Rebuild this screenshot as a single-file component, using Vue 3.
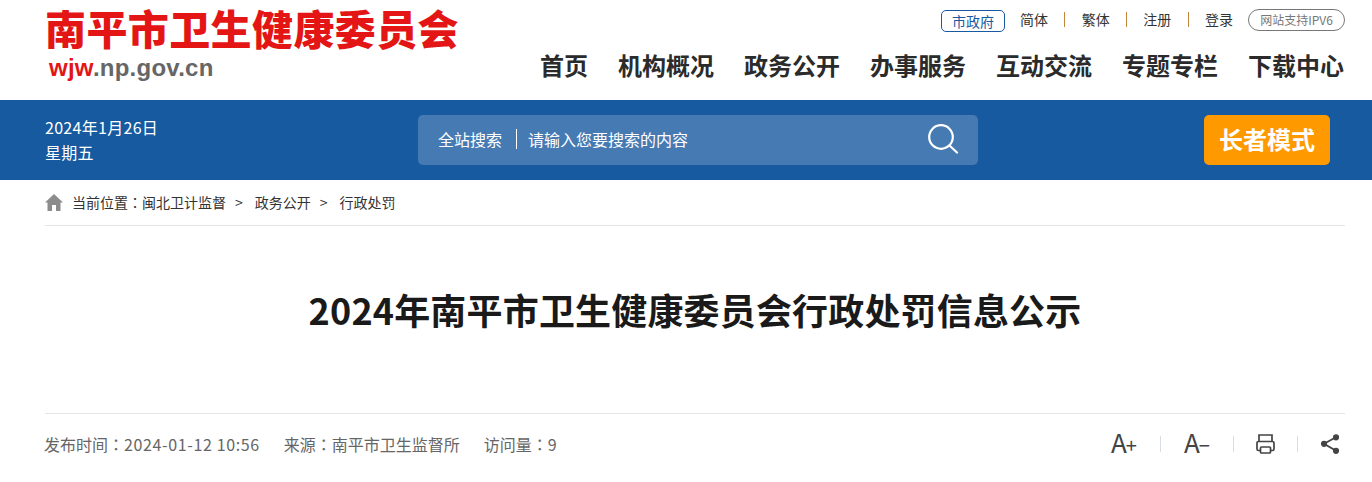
<template>
  <div class="page">
    <header class="head">
      <div class="logo">
        <div class="logo-name">南平市卫生健康委员会</div>
        <div class="logo-url"><span class="red">wjw</span>.np.gov.cn</div>
      </div>
      <div class="head-right">
        <div class="toplinks">
          <a class="gov">市政府</a>
          <template v-for="(item, i) in links" :key="item">
            <a class="lnk">{{ item }}</a>
            <i v-if="i < links.length - 1" class="sep"></i>
          </template>
          <a class="ipv6">网站支持IPV6</a>
        </div>
        <nav class="nav">
          <a v-for="item in navs" :key="item">{{ item }}</a>
        </nav>
      </div>
    </header>

    <div class="band">
      <div class="date">
        <div>2024年1月26日</div>
        <div>星期五</div>
      </div>
      <div class="search">
        <span class="search-label">全站搜索</span>
        <span class="search-text">请输入您要搜索的内容</span>
        <svg class="search-icon" width="31" height="30" viewBox="0 0 31 30" fill="none" stroke="#fff" stroke-width="2.200" stroke-linecap="round">
          <circle cx="13" cy="13" r="11.800" />
          <path d="M22 22l7 6.500" />
        </svg>
      </div>
      <a class="elder">长者模式</a>
    </div>

    <div class="crumb">
      <svg class="home" width="18" height="17" viewBox="0 0 18 17" fill="#8c8c8c">
        <path d="M9 0L18 8.500H15.500V17H11V11H7V17H2.500V8.500H0Z" />
      </svg>
      <span>当前位置<span class="colon">：</span>闽北卫计监督</span>
      <span class="gt">&gt;</span>
      <span>政务公开</span>
      <span class="gt">&gt;</span>
      <span>行政处罚</span>
    </div>

    <h1 class="title">2024年南平市卫生健康委员会行政处罚信息公示</h1>

    <div class="meta">
      <div class="meta-left">
        <span>发布时间<span class="colon">：</span><span class="num">2024-01-12 10:56</span></span>
        <span>来源<span class="colon">：</span>南平市卫生监督所</span>
        <span>访问量<span class="colon">：</span><span class="num">9</span></span>
      </div>
      <div class="tools">
        <span class="tool-a">A<small>+</small></span>
        <i class="tool-sep"></i>
        <span class="tool-a">A<small>−</small></span>
        <i class="tool-sep"></i>
        <svg class="printer" width="19" height="20" viewBox="0 0 19 20" fill="none" stroke="#444" stroke-width="1.700">
          <path d="M3 7.500V1h13v6.500" />
          <path d="M4.500 16.500H2.500a1.500 1.500 0 0 1-1.500-1.500V9a1.500 1.500 0 0 1 1.500-1.500h14A1.500 1.500 0 0 1 18 9v6a1.500 1.500 0 0 1-1.500 1.500H14.500" />
          <rect x="4.500" y="13" width="10" height="6" rx="1" />
        </svg>
        <i class="tool-sep"></i>
        <svg width="19" height="20" viewBox="0 0 19 20" fill="#444" stroke="#444" stroke-width="1.800">
          <path d="M15 3.300L3 9.800l12 7" fill="none" />
          <circle cx="15" cy="3.300" r="2.200" />
          <circle cx="3" cy="9.800" r="2.200" />
          <circle cx="15" cy="16.800" r="2.200" />
        </svg>
      </div>
    </div>
  </div>
</template>

<script setup>
const links = ["简体", "繁体", "注册", "登录"];
const navs = ["首页", "机构概况", "政务公开", "办事服务", "互动交流", "专题专栏", "下载中心"];
</script>

<style>
body {
  margin: 0;
  background: #fff;
}
</style>

<style scoped>
.page {
  width: 1372px;
  height: 482px;
  overflow: hidden;
  font-family: "Noto Sans CJK SC", "Liberation Sans", sans-serif;
  color: #333;
}

.head {
  display: flex;
  justify-content: space-between;
  height: 100px;
  padding: 0 27px 0 45px;
}

.logo {
  padding-top: 2px;
}

.logo-name {
  font-size: 41px;
  font-weight: 900;
  line-height: 50px;
  color: #e31515;
  letter-spacing: 0.400px;
}

.logo-url {
  font-family: "Liberation Sans", sans-serif;
  font-size: 24px;
  font-weight: 700;
  line-height: 28px;
  letter-spacing: 0.250px;
  margin: 2px 0 0 4px;
  color: #666;
}

.red {
  color: #e31515;
}

.head-right {
  display: flex;
  flex-direction: column;
  align-items: flex-end;
}

.toplinks {
  display: flex;
  align-items: flex-start;
  height: 23px;
  margin-top: 9px;
  font-size: 14px;
  line-height: 20px;
  color: #333;
}

.gov {
  width: 64px;
  height: 22px;
  margin: 1px 15px 0 0;
  border: 1px solid #175a9f;
  border-radius: 5px;
  box-sizing: border-box;
  text-align: center;
  line-height: 20px;
  color: #175a9f;
}

.sep {
  width: 1px;
  height: 15px;
  margin: 3px 16.330px 0;
  background: #c0863c;
}

.ipv6 {
  width: 97px;
  height: 22px;
  margin-left: 15px;
  border: 1px solid #777;
  border-radius: 11px;
  box-sizing: border-box;
  text-align: center;
  line-height: 20px;
  font-size: 12px;
  color: #777;
}

.nav {
  display: flex;
  gap: 30px;
  margin-top: 15px;
  padding-right: 1px;
  font-size: 24px;
  font-weight: 700;
  line-height: 36px;
  color: #2b2b2b;
}

.band {
  display: flex;
  align-items: center;
  height: 80px;
  padding: 0 42px 0 45px;
  background: #175a9f;
  color: #fff;
}

.date {
  width: 373px;
  font-size: 16px;
  line-height: 25px;
  letter-spacing: 0.300px;
}

.search {
  display: flex;
  align-items: center;
  width: 560px;
  height: 50px;
  padding: 0 19px 3px 20px;
  box-sizing: border-box;
  border-radius: 5px;
  background: #467ab3;
  font-size: 16px;
}

.search-label {
  padding-right: 14px;
  border-right: 1px solid #fff;
  line-height: 20px;
}

.search-text {
  flex: 1;
  margin-left: 11px;
}

.elder {
  width: 126px;
  height: 50px;
  margin-left: auto;
  border-radius: 5px;
  background: #ff9900;
  text-align: center;
  line-height: 48px;
  font-size: 24px;
  font-weight: 700;
}

.crumb {
  display: flex;
  align-items: center;
  height: 46px;
  padding-bottom: 1px;
  box-sizing: border-box;
  margin: 0 27px 0 45px;
  border-bottom: 1px solid #e5e5e5;
  font-size: 14px;
  color: #333;
}

.colon {
  font-family: "Noto Sans CJK TC", sans-serif;
}

.home {
  margin-right: 9px;
}

.gt {
  margin: 0 12px 0 9px;
}

.title {
  height: 188px;
  margin: 0 27px 0 45px;
  border-bottom: 1px solid #e5e5e5;
  box-sizing: border-box;
  padding-top: 55px;
  text-align: center;
  font-size: 36px;
  font-weight: 700;
  line-height: 56px;
  letter-spacing: 0.170px;
  color: #1a1a1a;
}

.meta {
  display: flex;
  justify-content: space-between;
  align-items: center;
  height: 60px;
  margin: 0 27px 0 44px;
  font-size: 16px;
  color: #666;
}

.meta-left {
  display: flex;
  gap: 24px;
}

.num {
  letter-spacing: 0.625px;
}

.tools {
  display: flex;
  align-items: center;
  padding-right: 5px;
  color: #444;
}

.tool-a {
  width: 26px;
  padding-bottom: 2px;
  font-size: 26px;
  line-height: 30px;
  white-space: nowrap;
}

.tool-a small {
  margin-left: -1px;
  font-size: 20px;
}

.tool-sep {
  width: 1px;
  height: 16px;
  margin: 0 23px;
  background: #d8dde4;
}

.printer {
  margin: 0 -1px;
}
</style>
